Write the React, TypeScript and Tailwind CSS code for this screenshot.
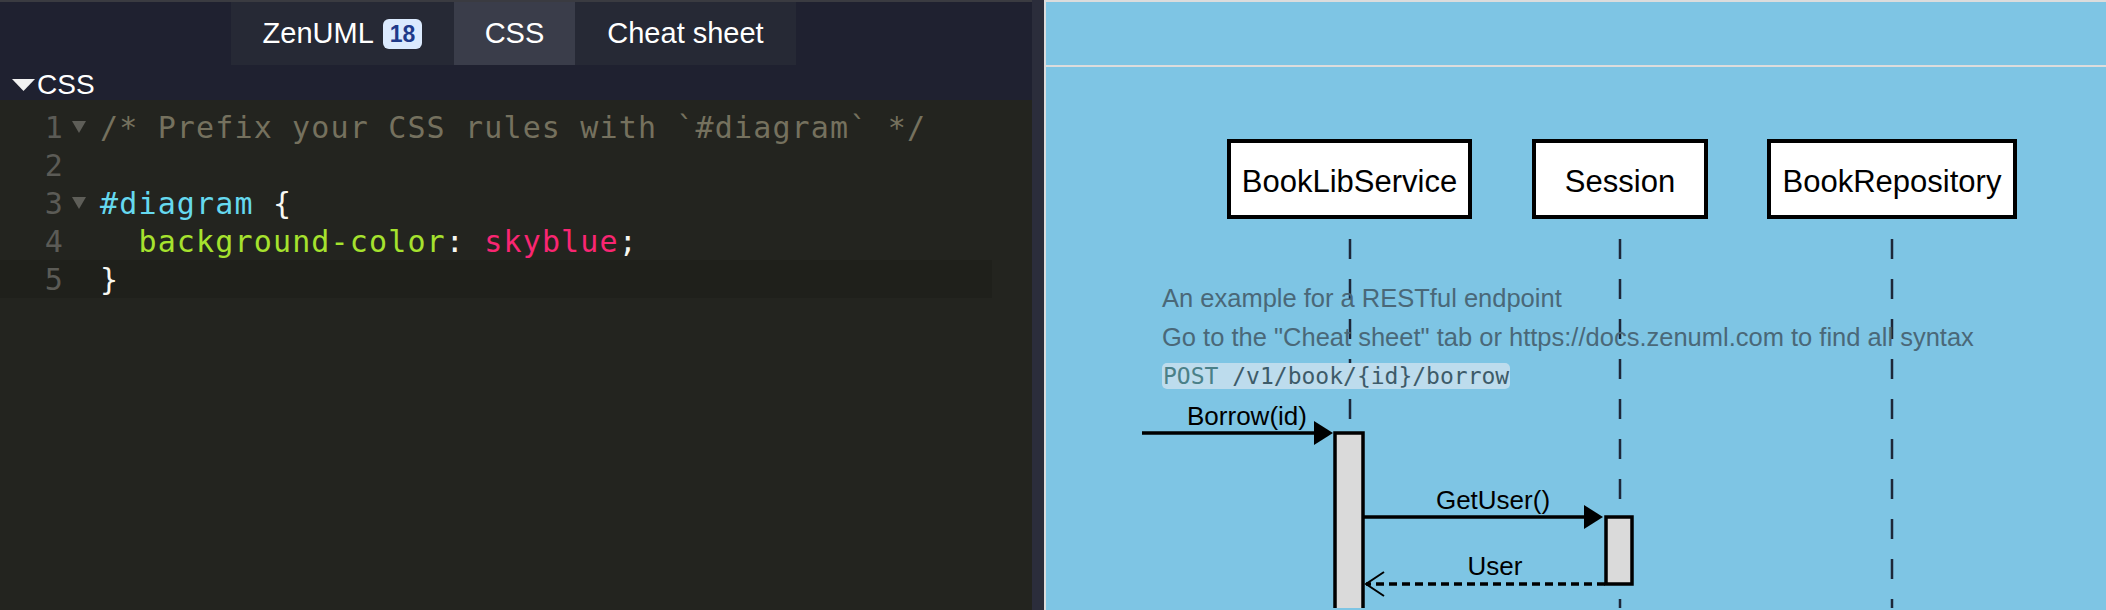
import React from "react"

const SANS = "font-['Liberation_Sans',Arial,sans-serif]"
const MONO = "font-['DejaVu_Sans_Mono','Liberation_Mono',monospace]"

function FoldArrow() {
  return (
    <svg width="14" height="12" viewBox="0 0 14 12" className="shrink-0">
      <polygon points="0,0 14,0 7,12" fill="#5e5e58" />
    </svg>
  )
}

// one row of the css editor
function CodeLine({ n, fold, active, children }: { n: number; fold?: boolean; active?: boolean; children?: React.ReactNode }) {
  return (
    <div className={`flex items-center h-[38px] w-[992px] ${active ? "bg-[#1f201b]" : ""}`}>
      <div className="w-[64px] text-right text-[#5b5b56]">{n}</div>
      <div className="w-[36px] flex justify-center pr-[6px]">{fold && <FoldArrow />}</div>
      <div className="whitespace-pre text-[#f8f8f2]">{children}</div>
    </div>
  )
}

function Tab({ w, active, children }: { w: string; active?: boolean; children: React.ReactNode }) {
  return (
    <div className={`${w} h-full flex items-center justify-center gap-[9px] text-white text-[29px] ${active ? "bg-[#3a3d4a]" : "bg-[#262935]"}`}>
      {children}
    </div>
  )
}

function Participant({ left, width, name }: { left: string; width: string; name: string }) {
  return (
    <div className={`absolute top-[72px] ${left} ${width} h-[80px] pt-[6px] border-[4px] border-black bg-white flex items-center justify-center text-[31px] text-black`}>
      {name}
    </div>
  )
}

function Diagram() {
  return (
    <div className="relative flex-1">
      <svg className="absolute inset-0" width="1058" height="541" viewBox="0 0 1058 541">
        {/* lifelines */}
        <g stroke="#1d2738" strokeWidth="2.5" strokeDasharray="20 20" strokeDashoffset="20">
          <line x1="304" y1="152" x2="304" y2="541" />
          <line x1="574" y1="152" x2="574" y2="541" />
          <line x1="846" y1="152" x2="846" y2="541" />
        </g>
        {/* Borrow(id) */}
        <line x1="96" y1="366" x2="270" y2="366" stroke="#000" strokeWidth="3.5" />
        <polygon points="268,354 287,366 268,378" fill="#000" />
        <rect x="289" y="366" width="28" height="200" fill="#dadada" stroke="#000" strokeWidth="3.5" />
        {/* GetUser() */}
        <line x1="318" y1="450" x2="540" y2="450" stroke="#000" strokeWidth="3.5" />
        <polygon points="538,438 557,450 538,462" fill="#000" />
        <rect x="560" y="450" width="26" height="67" fill="#dadada" stroke="#000" strokeWidth="3.5" />
        {/* User return */}
        <line x1="559" y1="517" x2="320" y2="517" stroke="#000" strokeWidth="3.5" strokeDasharray="8 5" />
        <polyline points="338,505 320,517 338,529" fill="none" stroke="#000" strokeWidth="2" />
      </svg>

      <Participant left="left-[181px]" width="w-[245px]" name="BookLibService" />
      <Participant left="left-[486px]" width="w-[176px]" name="Session" />
      <Participant left="left-[721px]" width="w-[250px]" name="BookRepository" />

      {/* comment */}
      <div className="absolute left-[116px] top-[212px] text-[25.5px] leading-[39px] text-[#4a6878]">
        <div>An example for a RESTful endpoint</div>
        <div>Go to the "Cheat sheet" tab or https://docs.zenuml.com to find all syntax</div>
        <div className="-mt-[1px]">
          <span className={`${MONO} text-[23px] leading-[26px] bg-[#bddced] rounded-[5px] px-[1px] inline-block whitespace-pre`}>
            <span className="text-[#4a8088]">POST</span>
            <span className="text-[#3d5b69]"> /v1/book/{"{id}"}/borrow</span>
          </span>
        </div>
      </div>

      {/* message labels */}
      <div className="absolute left-[103px] w-[196px] top-[330px] text-center text-[26px] text-black">Borrow(id)</div>
      <div className="absolute left-[325px] w-[244px] top-[414px] text-center text-[26px] text-black">GetUser()</div>
      <div className="absolute left-[327px] w-[244px] top-[480px] text-center text-[26px] text-black">User</div>
    </div>
  )
}

export default function App() {
  return (
    <div className={`flex w-[2106px] h-[610px] overflow-hidden ${SANS}`}>
      {/* editor side */}
      <div className="w-[1032px] flex flex-col bg-[#23241f]">
        <div className="h-[65px] flex bg-[#1f2130] border-t-2 border-[#3a3b41] pl-[231px]">
          <Tab w="w-[223px]">
            <span>ZenUML</span>
            <span className="bg-[#dbeafe] text-[#1e3a8a] font-bold text-[23px] leading-[30px] rounded-[6px] px-[7px]">18</span>
          </Tab>
          <Tab w="w-[121px]" active>CSS</Tab>
          <Tab w="w-[221px]">Cheat sheet</Tab>
        </div>

        <div className="h-[35px] flex items-center bg-[#1f2130] pl-[12px] pt-[4px] text-white text-[28px]">
          <svg width="23" height="12" viewBox="0 0 23 12" className="shrink-0">
            <polygon points="0,0 23,0 11.5,12" fill="#f2f2f2" />
          </svg>
          <span className="ml-[2px]">CSS</span>
        </div>

        <div className={`flex-1 pt-[8px] ${MONO} text-[30px] tracking-[1.15px]`}>
          <CodeLine n={1} fold>
            <span className="text-[#75715e]">/* Prefix your CSS rules with `#diagram` */</span>
          </CodeLine>
          <CodeLine n={2} />
          <CodeLine n={3} fold>
            <span className="text-[#66d9ef]">#diagram</span> {"{"}
          </CodeLine>
          <CodeLine n={4}>
            {"  "}<span className="text-[#a6e22e]">background-color</span>: <span className="text-[#f92672]">skyblue</span>;
          </CodeLine>
          <CodeLine n={5} active>{"}"}</CodeLine>
        </div>
      </div>

      {/* splitter */}
      <div className="w-[12px] bg-[#2b2d3b]" />

      {/* diagram side */}
      <div className="flex-1 flex flex-col bg-[#7ec5e4] border-l-2 border-t-2 border-[#dcdcdc]">
        <div className="h-[65px] border-b-2 border-[#dcdcdc]" />
        <Diagram />
      </div>
    </div>
  )
}
